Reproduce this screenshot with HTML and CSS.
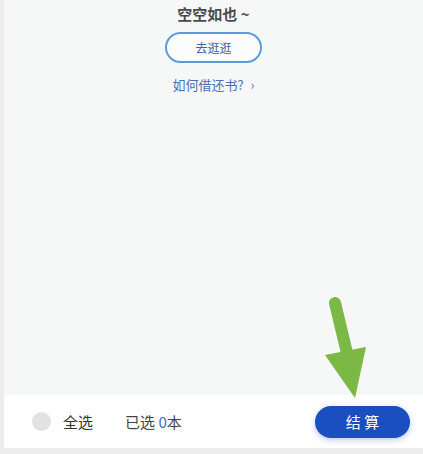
FILE: index.html
```html
<!DOCTYPE html>
<html lang="zh">
<head>
<meta charset="utf-8">
<link rel="stylesheet" href="styles.css">
</head>
<body>
<div class="page">
  <main class="empty">
    <div class="empty-title">空空如也 ~</div>
    <button class="go-btn">去逛逛</button>
    <div class="howto">如何借还书? <span class="chev">›</span></div>
  </main>
  <footer class="bar">
    <div class="sel-all"><span class="radio"></span><span class="sel-label">全选</span></div>
    <div class="count">已选 <span class="num">0</span>本</div>
    <button class="checkout">结 算</button>
  </footer>
  <div class="bottom-strip"></div>
  <svg class="arrow" width="60" height="110" viewBox="0 0 60 110">
    <path d="M13 6 L25 56" stroke="#7bb844" stroke-width="12" stroke-linecap="round" fill="none"/>
    <polygon points="3,58 44,50 33,101" fill="#7bb844"/>
  </svg>
</div>
</body>
</html>
```
FILE: styles.css
```css
html, body {
  margin: 0;
  padding: 0;
}
body {
  font-family: "Noto Sans CJK SC", "Noto Sans", sans-serif;
  background: #ededed;
}
.page {
  position: relative;
  width: 423px;
  height: 454px;
  display: flex;
  flex-direction: column;
  box-sizing: border-box;
  border-left: 4px solid #ececec;
}
.empty {
  flex: 1;
  background: #f6f8f8;
  display: flex;
  flex-direction: column;
  align-items: center;
  padding-top: 3px;
}
.empty-title {
  font-size: 15px;
  font-weight: bold;
  color: #4a4a4a;
  line-height: 22px;
}
.go-btn {
  margin-top: 7px;
  width: 97px;
  height: 31px;
  border: 2px solid #5b9be0;
  border-radius: 16px;
  background: #fbfcfd;
  color: #3e63a8;
  font-family: inherit;
  font-size: 12px;
  padding: 0;
}
.howto {
  margin-top: 13px;
  font-size: 13px;
  color: #4b6fb6;
  line-height: 18px;
}
.chev {
  margin-left: 4px;
  color: #6a84b8;
}
.bar {
  height: 53px;
  background: #ffffff;
  display: flex;
  align-items: center;
  padding: 0 13px 0 28px;
  box-sizing: border-box;
}
.sel-all {
  display: flex;
  align-items: center;
}
.radio {
  width: 19px;
  height: 19px;
  border-radius: 50%;
  background: #e2e2e2;
}
.sel-label {
  margin-left: 12px;
  font-size: 15px;
  color: #333;
}
.count {
  margin-left: 32px;
  font-size: 15px;
  color: #444;
}
.num {
  color: #2d6fd6;
}
.checkout {
  margin-left: auto;
  width: 95px;
  height: 32px;
  border: none;
  border-radius: 16px;
  background: #1b4fbf;
  color: #fff;
  font-family: inherit;
  font-size: 15px;
  box-shadow: 0 2px 6px rgba(27, 79, 191, 0.3);
  padding: 0;
}
.bottom-strip {
  height: 6px;
  background: #ececec;
}
.arrow {
  position: absolute;
  left: 318px;
  top: 297px;
}
```
